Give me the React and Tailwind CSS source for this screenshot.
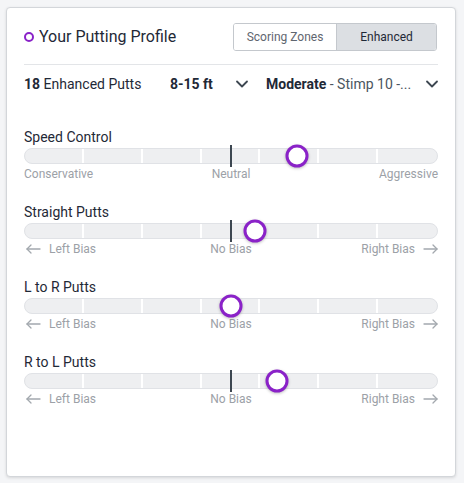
import { ChevronDown } from 'lucide-react'

const SLIDERS = [
  { label: 'Speed Control', value: 0.66, left: 'Conservative', center: 'Neutral', right: 'Aggressive', arrows: false },
  { label: 'Straight Putts', value: 0.558, left: 'Left Bias', center: 'No Bias', right: 'Right Bias', arrows: true },
  { label: 'L to R Putts', value: 0.5, left: 'Left Bias', center: 'No Bias', right: 'Right Bias', arrows: true },
  { label: 'R to L Putts', value: 0.611, left: 'Left Bias', center: 'No Bias', right: 'Right Bias', arrows: true },
]

function Arrow({ dir }) {
  return (
    <svg width="15" height="10" viewBox="0 0 15 10" fill="none" stroke="#a3a8ae" strokeWidth="1.3" strokeLinecap="round" strokeLinejoin="round">
      {dir === 'left' ? (
        <>
          <path d="M1 5h13" />
          <path d="M5 1 1 5l4 4" />
        </>
      ) : (
        <>
          <path d="M1 5h13" />
          <path d="M10 1l4 4-4 4" />
        </>
      )}
    </svg>
  )
}

function BiasSlider({ label, value, left, center, right, arrows }) {
  return (
    <div className="flex flex-col">
      <div className="text-[14px] leading-[20px] text-[#1f2937]">{label}</div>
      <div className="relative mt-px h-[16px] rounded-full border border-[#e0e2e6] bg-[#eeeff1]">
        <div className="grid h-full grid-cols-7">
          {[0, 1, 2, 3, 4, 5, 6].map((i) => (
            <div key={i} className={i < 6 ? 'border-r-2 border-white' : ''} />
          ))}
        </div>
        <div className="absolute left-1/2 top-[-4px] h-[22px] w-[2px] -translate-x-1/2 bg-[#3d4751]" />
        <div
          className="absolute top-1/2 h-[23px] w-[23px] -translate-x-1/2 -translate-y-1/2 rounded-full border-[3px] border-[#8a22c8] bg-white shadow-[0_1px_3px_rgba(0,0,0,0.25)]"
          style={{ left: `${value * 100}%` }}
        />
      </div>
      <div className="mt-[2px] grid grid-cols-3 text-[12px] leading-[16px] text-[#9ca1a7]">
        <div className="flex items-center gap-[8px]">
          {arrows && (
            <span className="pl-[2px]">
              <Arrow dir="left" />
            </span>
          )}
          <span>{left}</span>
        </div>
        <div className="text-center">{center}</div>
        <div className="flex items-center justify-end gap-[8px]">
          <span>{right}</span>
          {arrows && <Arrow dir="right" />}
        </div>
      </div>
    </div>
  )
}

export default function App() {
  return (
    <div className="min-h-screen bg-[#f4f5f7] pl-[6px] pt-[7px]" style={{ fontFamily: 'Roboto, "Noto Sans", sans-serif' }}>
      <div className="h-[470px] w-[450px] rounded-[4px] border border-[#d3d6da] bg-white px-[17px] pt-[15px] shadow-[0_1px_3px_rgba(0,0,0,0.12)]">
        <div className="flex h-[28px] items-center justify-between">
          <div className="flex items-center gap-[5px]">
            <span className="h-[10px] w-[10px] rounded-full border-2 border-[#8a22c8]" />
            <span className="text-[16px] text-[#1f2937]">Your Putting Profile</span>
          </div>
          <div className="mr-px flex h-[28px] overflow-hidden rounded-[3px] border border-[#c4c8cd] text-[12px]">
            <div className="flex w-[102px] items-center justify-center bg-white text-[#5f6670]">Scoring Zones</div>
            <div className="flex w-[100px] items-center justify-center border-l border-[#c4c8cd] bg-[#dcdfe3] text-[#1f2937]">Enhanced</div>
          </div>
        </div>
        <div className="mt-[13px] border-t border-[#e3e5e8]" />
        <div className="flex h-[38px] items-center text-[14px] text-[#1f2937]">
          <div className="w-[146px]">
            <span className="font-bold">18</span> Enhanced Putts
          </div>
          <div className="flex w-[82px] items-center justify-between">
            <span className="font-bold">8-15 ft</span>
            <ChevronDown size={20} strokeWidth={2.2} className="text-[#3d4751]" />
          </div>
          <div className="ml-[14px] flex flex-1 items-center justify-between">
            <span>
              <span className="font-bold">Moderate</span>
              <span className="text-[#4b5560]"> - Stimp 10 -...</span>
            </span>
            <ChevronDown size={20} strokeWidth={2.2} className="-mr-[4px] text-[#3d4751]" />
          </div>
        </div>
        <div className="flex flex-col gap-[20px] pt-[24px]">
          {SLIDERS.map((s) => (
            <BiasSlider key={s.label} {...s} />
          ))}
        </div>
      </div>
    </div>
  )
}
